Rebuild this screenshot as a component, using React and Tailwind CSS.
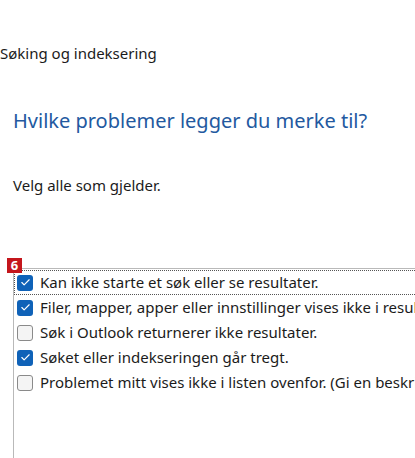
import { Check } from "lucide-react";

const items = [
  { label: "Kan ikke starte et søk eller se resultater.", checked: true, focused: true },
  { label: "Filer, mapper, apper eller innstillinger vises ikke i resultatene.", checked: true },
  { label: "Søk i Outlook returnerer ikke resultater.", checked: false },
  { label: "Søket eller indekseringen går tregt.", checked: true },
  { label: "Problemet mitt vises ikke i listen ovenfor. (Gi en beskrivelse nedenfor.)", checked: false },
];

const Box = ({ checked }) =>
  checked ? (
    <span className="flex h-[16px] w-[16px] shrink-0 items-center justify-center rounded-[3px] bg-[#0f62b8]">
      <Check className="h-[11px] w-[11px] text-white" strokeWidth={2.5} />
    </span>
  ) : (
    <span className="h-[16px] w-[16px] shrink-0 rounded-[3px] border border-[#8a8a8a] bg-[#f4f4f4]" />
  );

export default function App() {
  return (
    <div
      className="h-[458px] w-[415px] overflow-hidden bg-white text-[#1b1b1b]"
      style={{ fontFamily: '"Noto Sans", "Open Sans", sans-serif' }}
    >
      <div className="pt-[43px] text-[15px] leading-[20px]">Søking og indeksering</div>

      <h1 className="mt-[44px] pl-[13px] text-[20px] leading-[28px] text-[#23599f]">
        Hvilke problemer legger du merke til?
      </h1>

      <p className="mt-[40px] pl-[13px] text-[15px] leading-[20px]">Velg alle som gjelder.</p>

      <div className="relative mt-[73px] ml-[13px] h-[200px] w-[420px] border-t border-l border-[#b9b9b9]">
        <span className="absolute -top-[11px] -left-[7px] flex h-[15px] w-[15px] items-center justify-center bg-[#c4161c] text-[13px] font-bold leading-none text-white">
          6
        </span>
        <ul className="pt-[1px]">
          {items.map((it) => (
            <li
              key={it.label}
              className={
                "flex h-[25px] items-center gap-[7px] whitespace-nowrap pl-[2px] text-[15px] " +
                (it.focused ? "border border-dotted border-[#555]" : "border border-transparent")
              }
            >
              <Box checked={it.checked} />
              <span>{it.label}</span>
            </li>
          ))}
        </ul>
      </div>
    </div>
  );
}
